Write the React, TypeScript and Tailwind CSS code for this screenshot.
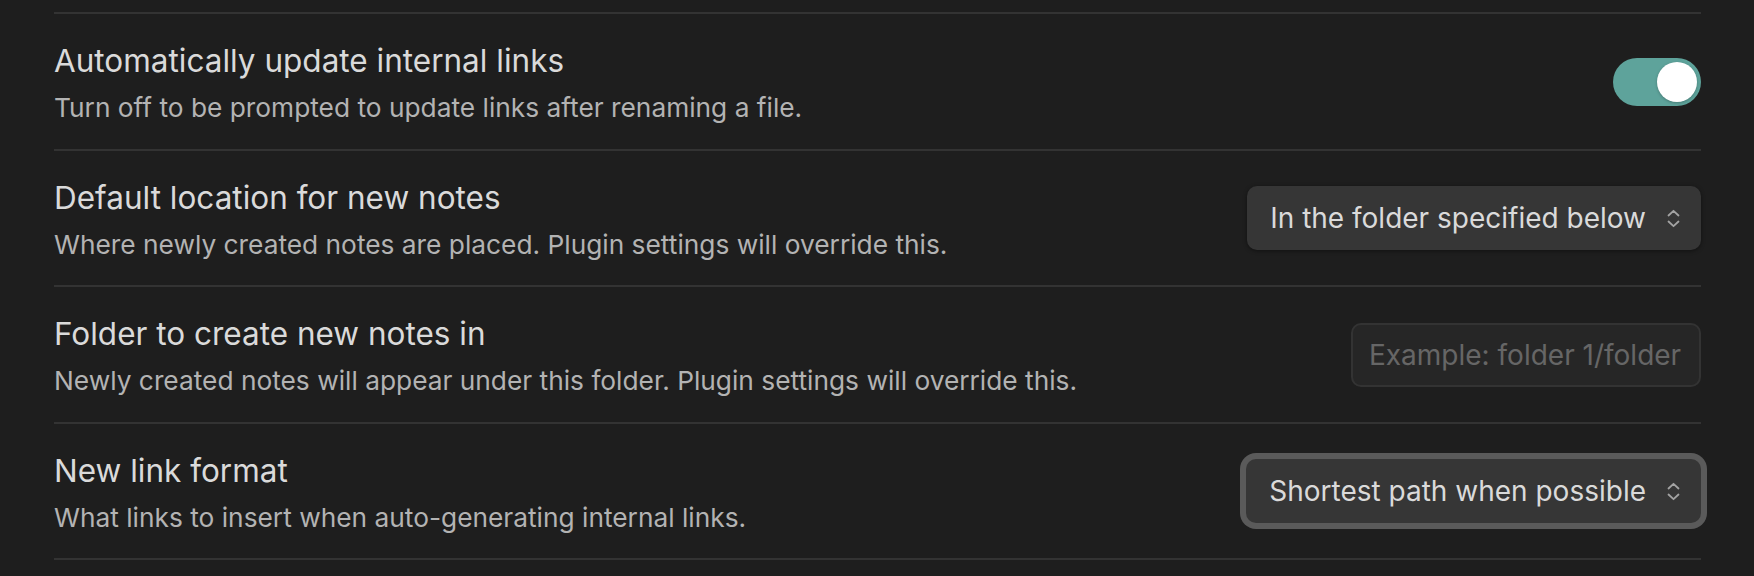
import React, { useState } from 'react';

function UpDown() {
  return (
    <svg width="15" height="19" viewBox="0 0 15 19" fill="none" stroke="#a3a3a3" strokeWidth="1.8" strokeLinecap="round" strokeLinejoin="round">
      <path d="M2.5 6.5 L7.5 1.8 L12.5 6.5" />
      <path d="M2.5 12.5 L7.5 17.2 L12.5 12.5" />
    </svg>
  );
}

function Dropdown({ value, focused }: { value: string; focused?: boolean }) {
  return (
    <button
      className={
        focused
          ? 'flex h-[64px] items-center gap-[20px] rounded-[10px] bg-[#363636] pl-[23px] pr-[20px] text-[28px] text-[#dadada] ring-[6px] ring-[#5a5a5a]'
          : 'flex h-[64px] items-center gap-[20px] rounded-[10px] bg-[#363636] pl-[23px] pr-[20px] text-[28px] text-[#dadada] shadow-[0_1px_4px_rgba(0,0,0,0.45)]'
      }
    >
      <span>{value}</span>
      <UpDown />
    </button>
  );
}

function Row({ h, title, desc, children }: { h: string; title: string; desc: string; children: React.ReactNode }) {
  return (
    <div className={`${h} flex items-center justify-between border-b-2 border-[#333333]`}>
      <div className="mt-[4px] flex flex-col">
        <div className="text-[31.5px] leading-[40px] text-[#dadada]">{title}</div>
        <div className="mt-[9px] text-[26.3px] leading-[36px] text-[#b3b3b3]">{desc}</div>
      </div>
      {children}
    </div>
  );
}

export default function App() {
  const [on, setOn] = useState(true);
  const [folder, setFolder] = useState('');

  return (
    <div className="h-[576px] w-full overflow-hidden bg-[#1e1e1e] pl-[54px] pr-[53px] pt-[12px]" style={{ fontFamily: 'Inter, "Noto Sans", sans-serif' }}>
      <div className="border-t-2 border-[#333333]">
        <Row h="h-[137px]" title="Automatically update internal links" desc="Turn off to be prompted to update links after renaming a file.">
          <button
            onClick={() => setOn(!on)}
            className="flex h-[48px] w-[88px] items-center justify-end rounded-full bg-[#5ea39b] px-[4px]"
          >
            <span className="h-[40px] w-[40px] rounded-full bg-white shadow-[0_1px_3px_rgba(0,0,0,0.25)]" />
          </button>
        </Row>
        <Row h="h-[136px]" title="Default location for new notes" desc="Where newly created notes are placed. Plugin settings will override this.">
          <Dropdown value="In the folder specified below" />
        </Row>
        <Row h="h-[137px]" title="Folder to create new notes in" desc="Newly created notes will appear under this folder. Plugin settings will override this.">
          <input
            value={folder}
            onChange={(e) => setFolder(e.target.value)}
            placeholder="Example: folder 1/folder"
            className="h-[64px] w-[350px] rounded-[10px] border-2 border-[#333333] bg-[#262626] px-[16px] text-[28px] text-[#dadada] placeholder:text-[#666666] outline-none"
          />
        </Row>
        <Row h="h-[136px]" title="New link format" desc="What links to insert when auto-generating internal links.">
          <Dropdown value="Shortest path when possible" focused />
        </Row>
      </div>
    </div>
  );
}
